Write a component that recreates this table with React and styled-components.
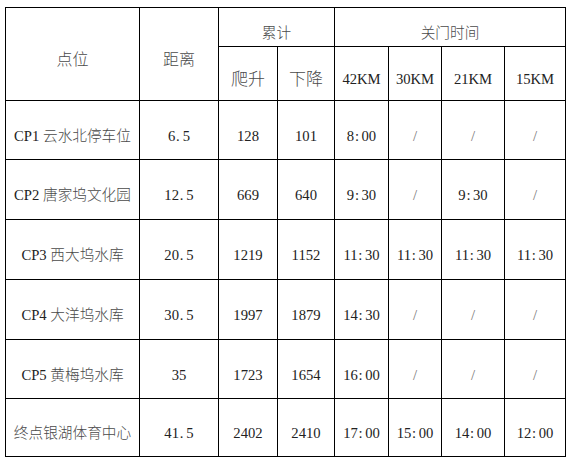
import styled, { createGlobalStyle } from "styled-components";

const GlobalStyle = createGlobalStyle`
  body {
    margin: 0;
    background: #fff;
  }
`;

const Page = styled.div`
  padding: 7px 0 0 5px;
`;

const Table = styled.table`
  border-collapse: collapse;
  table-layout: fixed;
  width: 560px;
  font-family: "Liberation Serif", "Noto Sans CJK SC", serif;
  font-size: 14.67px;
  color: #222;
`;

const Cell = styled.td`
  border: 1px solid #000;
  padding: 12px 0 0;
  text-align: center;
  vertical-align: middle;
  white-space: nowrap;
  line-height: 1;
  font-size: ${(p) => p.$size || 14.67}px;
  color: ${(p) => (p.$muted ? "#777" : "#222")};
`;

const Zh = styled.span`
  color: #4a4a4a;
  font-weight: 300;
`;

// SimSun 半角标点占一个字宽，用这个模拟 "6. 5"、"8: 00"
const Punct = styled.span`
  display: inline-block;
  width: 0.5em;
  text-align: left;
  padding-left: 0.05em;
  box-sizing: border-box;
`;

const Row = styled.tr`
  height: ${(p) => p.$h}px;
`;

function Wide({ text }) {
  return (
    <>
      {text.split("").map((c, i) =>
        c === "." || c === ":" ? <Punct key={i}>{c}</Punct> : c
      )}
    </>
  );
}

const cols = [134, 79, 59, 57, 54, 53, 63, 61];

const rows = [
  { h: 59, name: ["CP1 ", "云水北停车位"], dist: "6.5", up: "128", down: "101", t: ["8:00", "/", "/", "/"] },
  { h: 60, name: ["CP2 ", "唐家坞文化园"], dist: "12.5", up: "669", down: "640", t: ["9:30", "/", "9:30", "/"] },
  { h: 60, name: ["CP3 ", "西大坞水库"], dist: "20.5", up: "1219", down: "1152", t: ["11:30", "11:30", "11:30", "11:30"] },
  { h: 60, name: ["CP4 ", "大洋坞水库"], dist: "30.5", up: "1997", down: "1879", t: ["14:30", "/", "/", "/"] },
  { h: 59, name: ["CP5 ", "黄梅坞水库"], dist: "35", up: "1723", down: "1654", t: ["16:00", "/", "/", "/"] },
  { h: 58, name: ["", "终点银湖体育中心"], dist: "41.5", up: "2402", down: "2410", t: ["17:00", "15:00", "14:00", "12:00"] },
];

export default function App() {
  return (
    <>
      <GlobalStyle />
      <Page>
        <Table>
          <colgroup>
            {cols.map((w, i) => (
              <col key={i} style={{ width: w }} />
            ))}
          </colgroup>
          <tbody>
            <Row $h={39}>
              <Cell rowSpan={2} $size={16}>
                <Zh>点位</Zh>
              </Cell>
              <Cell rowSpan={2} $size={16}>
                <Zh>距离</Zh>
              </Cell>
              <Cell colSpan={2}>
                <Zh>累计</Zh>
              </Cell>
              <Cell colSpan={4}>
                <Zh>关门时间</Zh>
              </Cell>
            </Row>
            <Row $h={54}>
              <Cell $size={17}>
                <Zh>爬升</Zh>
              </Cell>
              <Cell $size={17}>
                <Zh>下降</Zh>
              </Cell>
              <Cell>42KM</Cell>
              <Cell>30KM</Cell>
              <Cell>21KM</Cell>
              <Cell>15KM</Cell>
            </Row>
            {rows.map((r) => (
              <Row key={r.name[1]} $h={r.h}>
                <Cell>
                  {r.name[0]}
                  <Zh>{r.name[1]}</Zh>
                </Cell>
                <Cell>
                  <Wide text={r.dist} />
                </Cell>
                <Cell>{r.up}</Cell>
                <Cell>{r.down}</Cell>
                {r.t.map((v, i) => (
                  <Cell key={i} $muted={v === "/"}>
                    <Wide text={v} />
                  </Cell>
                ))}
              </Row>
            ))}
          </tbody>
        </Table>
      </Page>
    </>
  );
}
